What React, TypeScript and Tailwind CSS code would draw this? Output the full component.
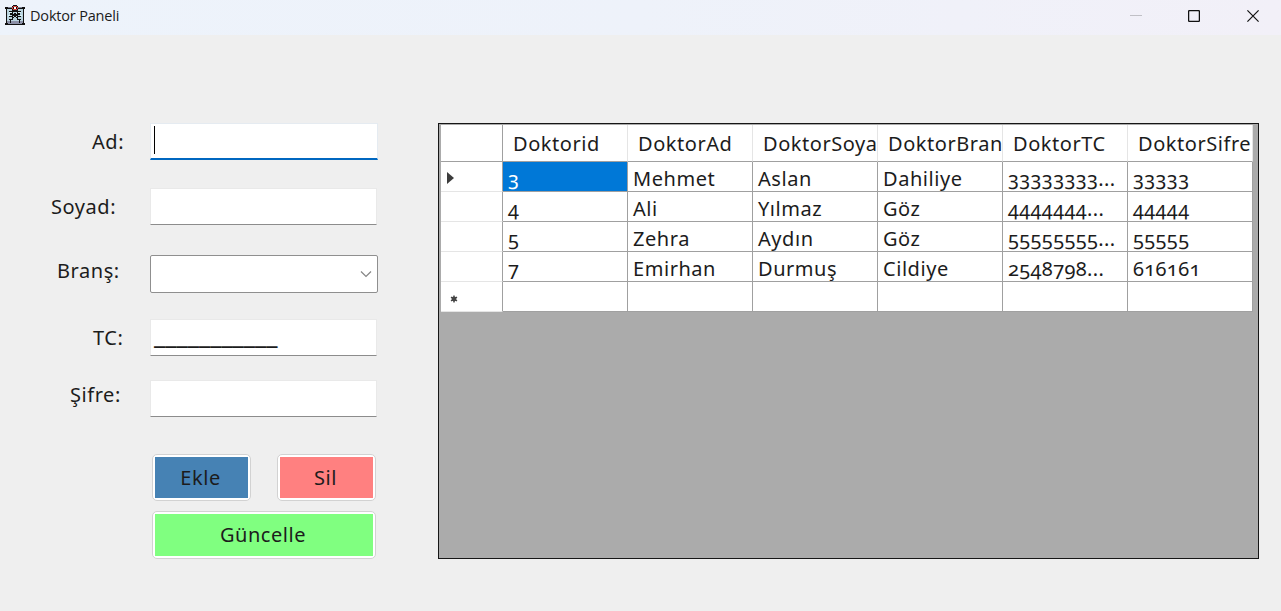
import React from "react";

const columns: string[] = ["Doktorid", "DoktorAd", "DoktorSoya", "DoktorBran", "DoktorTC", "DoktorSifre"];

const rows: string[][] = [
  ["3", "Mehmet", "Aslan", "Dahiliye", "33333333...", "33333"],
  ["4", "Ali", "Yılmaz", "Göz", "4444444...", "44444"],
  ["5", "Zehra", "Aydın", "Göz", "55555555...", "55555"],
  ["7", "Emirhan", "Durmuş", "Cildiye", "2548798...", "616161"],
  ["", "", "", "", "", ""],
];

function HospitalIcon() {
  return (
    <svg width="20" height="20" viewBox="0 0 20 20" shapeRendering="crispEdges">
      <path fill="#b9d3de" d="M2 3h16v13H2z" />
      <path fill="#8b8fa6" d="M2 16h16v3H2z" />
      <path fill="#111" d="M0 2h20v2H0zM1 4h1v15H1zM18 4h1v15h-1zM0 18h3v2H0zM17 18h3v2h-3zM3 19h14v1H3zM4 6h3v1H4zM8 6h4v1H8zM13 6h3v1h-3zM5 8h2v2H5zM8 9h1v2H8zM9 8h2v4H9zM11 9h1v2h-1zM13 8h2v2h-2zM4 11h3v1H4zM13 11h3v1h-3zM8 12h1v1H8zM11 12h1v1h-1zM4 14h4v1H4zM5 14h1v4H5zM12 14h4v1h-4zM14 14h1v4h-1zM7 4h1v10H7zM12 4h1v10h-1z" />
      <path fill="#d8f5fa" d="M4 7h3v1H4zM13 7h3v1h-3zM3 10h2v1H3zM15 10h2v1h-2z" />
      <path fill="#7d8294" d="M3 2h4v1H3zM13 2h4v1h-4z" />
      <path fill="#111" d="M8 0h4v1H8zM7 1h6v4H7zM8 5h4v1H8z" />
      <path fill="#e0443e" d="M8 1h4v1H8zM7 2h1v2H7zM12 2h1v2h-1zM8 4h4v1H8z" />
      <path fill="#fff" d="M9 2h2v2H9z" />
    </svg>
  );
}

function TitleBar() {
  return (
    <header className="flex h-[35px] items-start bg-gradient-to-r from-[#edf3fb] via-[#eef2fa] to-[#f2f0f8] pl-[5px]">
      <div className="pt-[5px]"><HospitalIcon /></div>
      <h1 className="ml-[5px] pt-[6px] font-['Open_Sans','Noto_Sans',sans-serif] text-[14.5px] leading-[20px] tracking-[-0.18px] text-[#1b1b1b]">Doktor Paneli</h1>
      <div className="ml-auto flex">
        <svg className="mr-[46px] mt-[9px]" width="12" height="13" viewBox="0 0 12 13"><path d="M0 6.5h12" stroke="#c0c0c6" /></svg>
        <svg className="mr-[47px] mt-[10px]" width="12" height="12" viewBox="0 0 12 12"><rect x=".6" y=".6" width="10.8" height="10.8" rx="1" fill="none" stroke="#111" strokeWidth="1.3" /></svg>
        <svg className="mr-[22px] mt-[10px]" width="12" height="12" viewBox="0 0 12 12"><path d="M.4.4l11.2 11.2M11.6.4L.4 11.6" stroke="#111" strokeWidth="1.2" /></svg>
      </div>
    </header>
  );
}

function Field({ label, className, labelClass, children }: { label: string; className: string; labelClass: string; children: React.ReactNode }) {
  return (
    <div className={`flex ${className}`}>
      <label className={`w-[150px] shrink-0 whitespace-nowrap leading-[28px] ${labelClass}`}>{label}</label>
      {children}
    </div>
  );
}

function ActionButton({ label, className, fill }: { label: string; className: string; fill: string }) {
  return (
    <button type="button" className={`h-[47px] rounded-[5px] border border-[#d2d2d2] bg-white p-[2px] ${className}`}>
      <span className={`flex h-full items-center justify-center pr-[2px] ${fill}`}>{label}</span>
    </button>
  );
}

const box = "h-[37px] w-[227px] border border-[#e9e9e9] border-b-[#8c8c8c] bg-white";

function Form() {
  return (
    <form className="w-[438px] shrink-0">
      <Field label="Ad:" className="mt-[88px] h-[65px]" labelClass="pl-[92px] pt-[5px]">
        <div className="h-[37px] w-[228px] border border-b-[2.5px] border-[#e5ebf1] border-b-[#0067c0] bg-white pl-[3px] pt-[2px]">
          <div className="h-[28px] w-px bg-black" />
        </div>
      </Field>
      <Field label="Soyad:" className="h-[67px]" labelClass="pl-[51px] pt-[5px]"><div className={box} /></Field>
      <Field label="Branş:" className="h-[64px]" labelClass="pl-[57px] pt-[2px]">
        <div className="flex h-[38px] w-[228px] items-center justify-end rounded-[2px] border border-[#8f8f8f] bg-white pr-[5px]">
          <svg width="12" height="8" viewBox="0 0 12 8"><path d="M1 1.5l5 5 5-5" fill="none" stroke="#858585" strokeWidth="1.2" /></svg>
        </div>
      </Field>
      <Field label="TC:" className="h-[61px]" labelClass="pl-[93px] pt-[5px]">
        <div className={`${box} pl-[3px] leading-[28px]`}><span className="text-[25.3px] tracking-normal">___________</span></div>
      </Field>
      <Field label="Şifre:" className="h-[74px]" labelClass="pl-[70px] pt-[1px]"><div className={box} /></Field>
      <div className="ml-[152px] grid w-[224px] grid-cols-[99px_99px] justify-between gap-y-[10px]">
        <ActionButton label="Ekle" className="" fill="bg-[#4682b4]" />
        <ActionButton label="Sil" className="" fill="bg-[#ff8080]" />
        <ActionButton label="Güncelle" className="col-span-2 h-[48px]" fill="bg-[#80ff80]" />
      </div>
    </form>
  );
}

function DoctorGrid() {
  return (
    <section className="mt-[88px] h-[436px] w-[821px] overflow-hidden border border-[#161616] bg-[#ababab] pl-[2px] pt-px">
      <div className="grid w-[812px] grid-cols-[62px_repeat(6,125px)] grid-rows-[37px]">
        <div className="border-b border-r border-[#a0a0a0] bg-white" />
        {columns.map((name) => (
          <div key={name} className="overflow-hidden whitespace-nowrap border-b border-r border-b-[#a0a0a0] border-r-[#e5e5e5] bg-white pl-[10px] pt-[5px] leading-[28px]">{name}</div>
        ))}
        {rows.map((row, i) => (
          <React.Fragment key={i}>
            <div className="flex h-[30px] items-center border-b border-r border-b-[#e5e5e5] border-r-[#a0a0a0] bg-white pl-[6px] pt-[2px]">
              {i === 0 && <svg width="7" height="12" viewBox="0 0 7 12"><path d="M0 0l7 6-7 6z" fill="#3c3c3c" /></svg>}
              {i === 4 && <svg className="ml-[3px] mt-[2px]" width="8" height="8" viewBox="0 0 8 8"><circle cx="4" cy="4" r="2.4" fill="#454545" /><path d="M4 .5v7M1 2.2l6 3.6M7 2.2L1 5.8" stroke="#454545" strokeWidth="1.4" /></svg>}
            </div>
            {row.map((text, j) => (
              <div key={j} className={`h-[30px] overflow-hidden whitespace-nowrap border-b border-r border-[#a0a0a0] pl-[5px] pt-[3px] leading-[28px] ${j > 3 ? "tracking-[0.35px]" : ""} ${i === 0 && j === 0 ? "bg-[#0078d7] text-white" : "bg-white"}`}>{text}</div>
            ))}
          </React.Fragment>
        ))}
      </div>
    </section>
  );
}

export default function App() {
  return (
    <div className="h-[611px] w-[1281px] overflow-hidden bg-[#efefef] font-['Noto_Sans','Open_Sans',sans-serif] text-[20px] oldstyle-nums tracking-[0.55px] text-[#1c1c1c]">
      <TitleBar />
      <main className="flex">
        <Form />
        <DoctorGrid />
      </main>
    </div>
  );
}
